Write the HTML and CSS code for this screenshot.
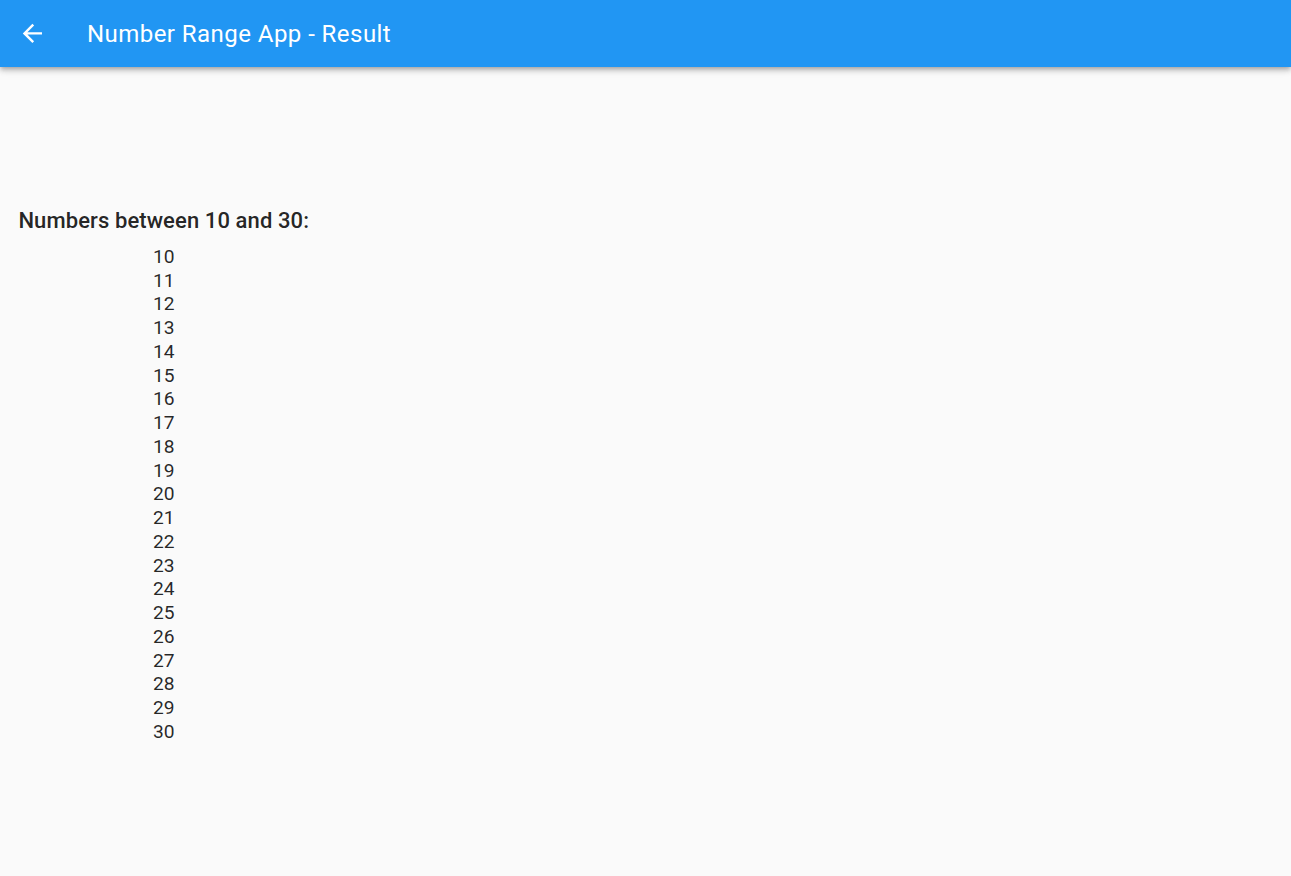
FILE: index.html
```html
<!DOCTYPE html>
<html lang="en">
<head>
<meta charset="utf-8">
<title>Number Range App - Result</title>
<link rel="stylesheet" href="styles.css">
</head>
<body>
<header class="appbar">
  <div class="back-btn" aria-label="Back">
    <svg class="back-icon" viewBox="0 0 24 24" width="28.8" height="28.8"><path d="M20 11H7.83l5.59-5.59L12 4l-8 8 8 8 1.41-1.41L7.83 13H20v-2z" fill="#fff"/></svg>
  </div>
  <h1 class="title">Number Range App - Result</h1>
</header>
<main class="content">
  <section class="result">
    <h2 class="heading">Numbers between 10 and 30:</h2>
    <div class="numbers">
      <div>10</div><div>11</div><div>12</div><div>13</div><div>14</div><div>15</div><div>16</div>
      <div>17</div><div>18</div><div>19</div><div>20</div><div>21</div><div>22</div><div>23</div>
      <div>24</div><div>25</div><div>26</div><div>27</div><div>28</div><div>29</div><div>30</div>
    </div>
  </section>
</main>
</body>
</html>
```
FILE: styles.css
```css
html, body {
  margin: 0;
  padding: 0;
}
body {
  background: #fafafa;
  font-family: Roboto, "Liberation Sans", sans-serif;
  color: rgba(0, 0, 0, 0.87);
  min-height: 876px;
}
.appbar {
  height: 67.2px;
  background: #2196f3;
  display: flex;
  align-items: center;
  box-shadow: 0 2px 4px -1px rgba(0,0,0,.2), 0 4px 5px 0 rgba(0,0,0,.14), 0 1px 10px 0 rgba(0,0,0,.12);
  position: relative;
  z-index: 1;
}
.back-btn {
  width: 64.4px;
  height: 67.2px;
  flex: none;
  display: flex;
  align-items: center;
  justify-content: center;
}
.back-icon {
  display: block;
}
.title {
  margin: 0 0 0 22.6px;
  font-size: 24px;
  font-weight: 400;
  letter-spacing: 0.45px;
  color: #fff;
  line-height: normal;
}
.content {
  padding: 140.4px 0 0 18.4px;
}
.result {
  display: inline-flex;
  flex-direction: column;
  align-items: center;
}
.heading {
  align-self: flex-start;
  margin: 0;
  font-size: 22px;
  font-weight: 500;
  letter-spacing: 0.1px;
  line-height: normal;
  color: rgba(0, 0, 0, 0.87);
}
.numbers {
  margin-top: 12.2px;
  display: flex;
  flex-direction: column;
  align-items: center;
  font-size: 19.2px;
  line-height: 23.75px;
  color: rgba(0, 0, 0, 0.85);
}
```
